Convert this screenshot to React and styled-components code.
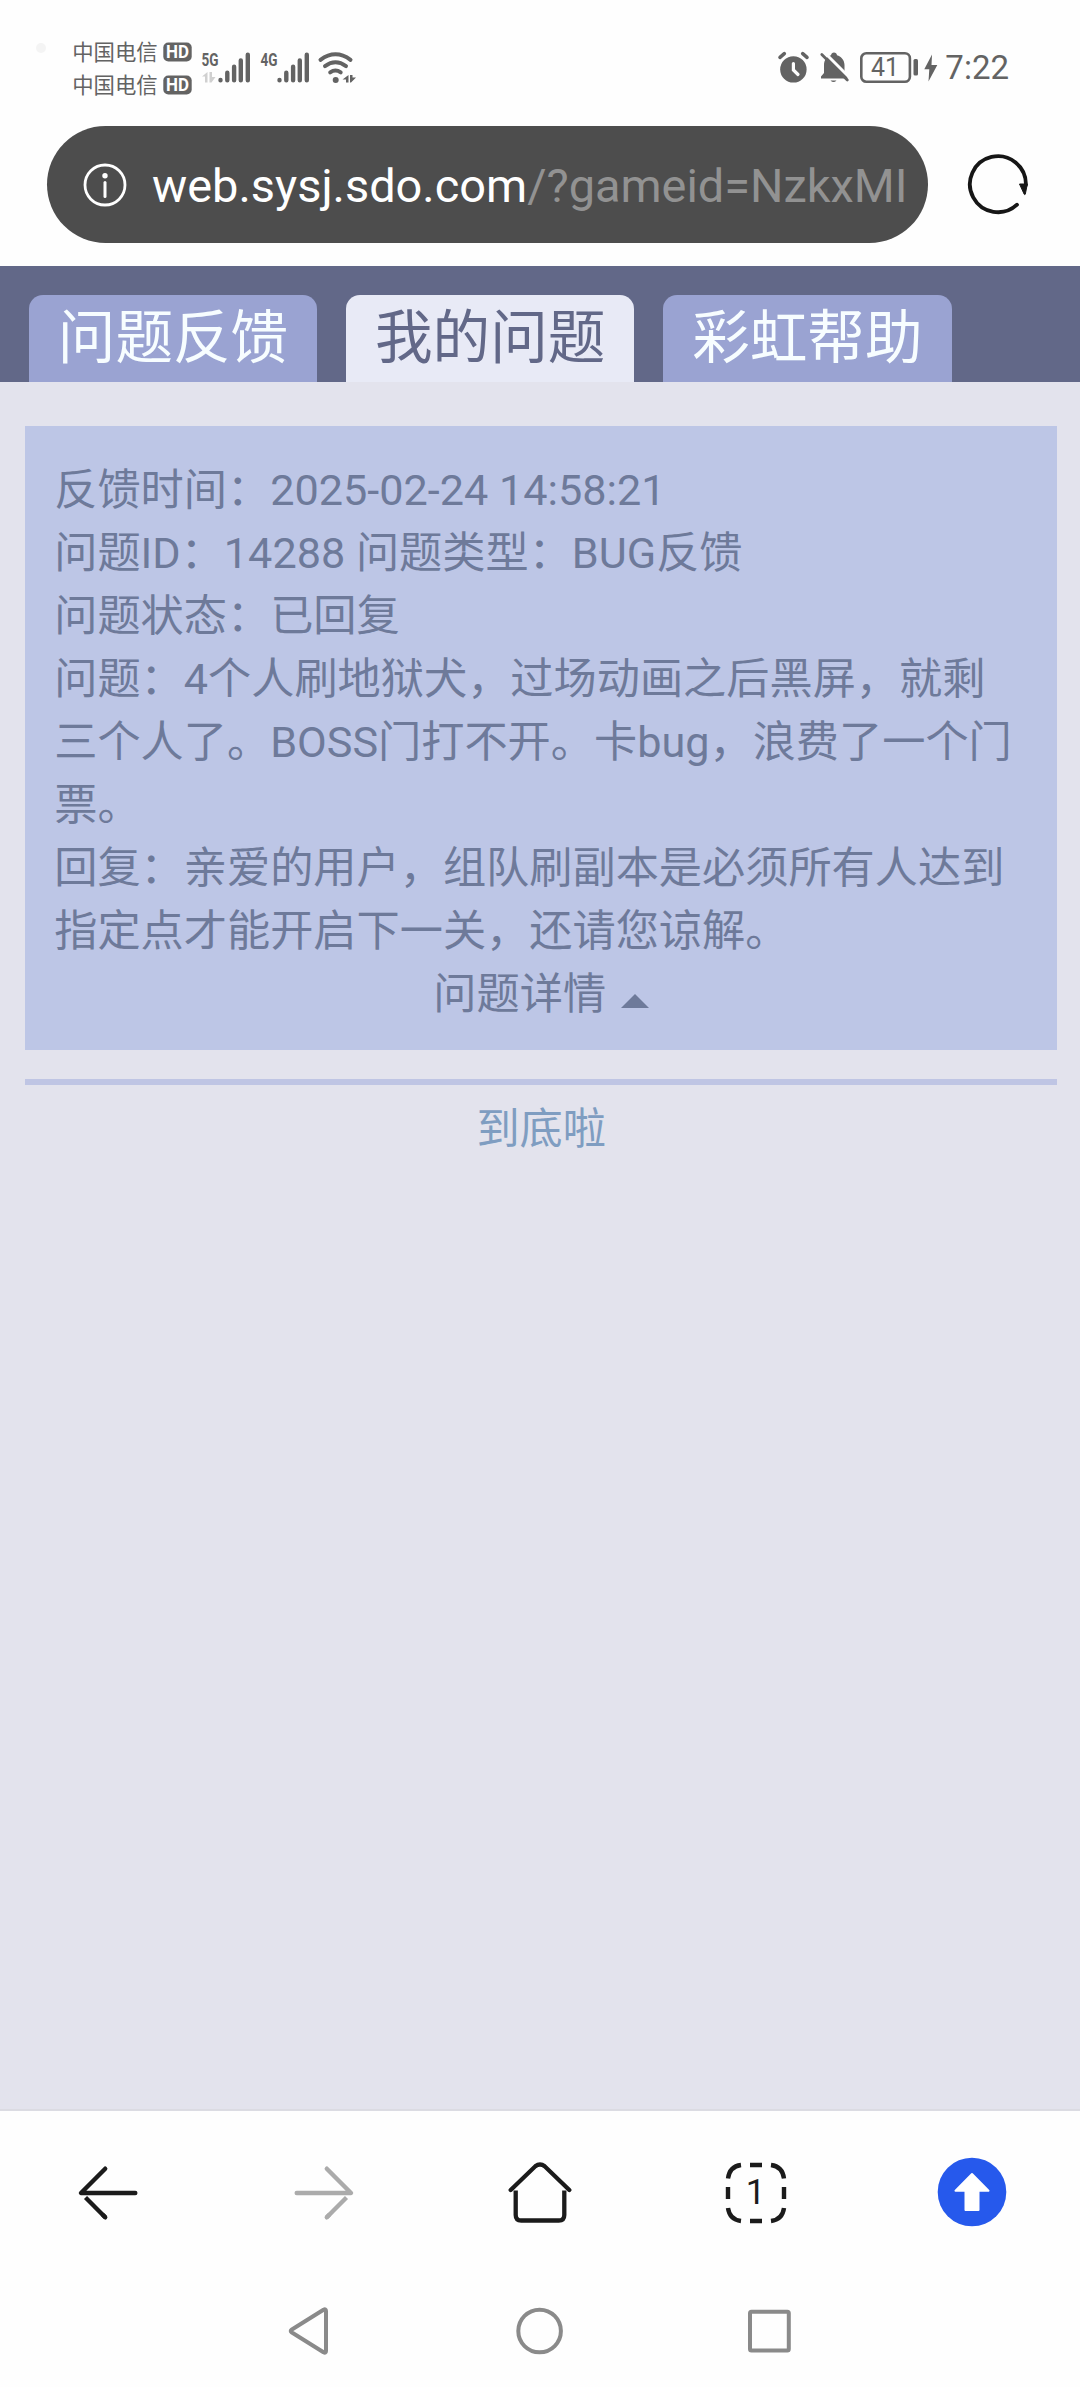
import React from "react";
import styled, { createGlobalStyle } from "styled-components";

const GlobalStyle = createGlobalStyle`
  body {
    margin: 0;
    background: #fefefe;
    font-family: Roboto, "Noto Sans CJK SC", sans-serif;
  }
  svg { display: block; flex: none; overflow: visible; }
`;

const Screen = styled.div`
  width: 1080px;
  height: 2387px;
  display: flex;
  flex-direction: column;
  overflow: hidden;
`;

const StatusBar = styled.header`
  box-sizing: border-box;
  height: 105px;
  padding: 30px 71px 0 36px;
  display: flex;
  align-items: center;
  justify-content: space-between;
  color: #636363;
`;

const StatusGroup = styled.div`
  display: flex;
  align-items: center;
  gap: ${(p) => p.$gap}px;
`;

const CameraDot = styled.i`
  width: 10px;
  height: 10px;
  margin: 0 17px 40px 0;
  border-radius: 50%;
  background: #f4f4f4;
`;

const Carriers = styled.div`
  display: flex;
  flex-direction: column;
  padding-top: 2px;
`;

const Carrier = styled.div`
  display: flex;
  align-items: center;
  gap: 5px;
  height: 33px;
  font-size: 21.4px;
  line-height: 33px;
`;

const Clock = styled.time`
  font-size: 33px;
  line-height: 40px;
  margin-left: -4px;
`;

const AddressRow = styled.div`
  display: flex;
  align-items: center;
  height: 117px;
  padding: 21px 52px 23px 47px;
  justify-content: space-between;
`;

const AddressBar = styled.div`
  box-sizing: border-box;
  width: 881px;
  height: 117px;
  padding: 0 20px 0 36px;
  border-radius: 59px;
  background: #4d4d4d;
  display: flex;
  align-items: center;
  gap: 25px;
`;

const Url = styled.div`
  flex: 1;
  padding-top: 3px;
  white-space: nowrap;
  font-size: 46.9px;
  line-height: 60px;
  color: #fff;
`;

const UrlRest = styled.span`
  color: #929292;
`;

const Tabs = styled.nav`
  box-sizing: border-box;
  height: 115.5px;
  padding: 29px 28.8px 0;
  display: flex;
  gap: 28.8px;
  background: #626888;
`;

const Tab = styled.button`
  width: 288.4px;
  padding: 1px 0 0;
  border: 0;
  border-radius: 14px 14px 0 0;
  font: inherit;
  font-size: 57.6px;
  line-height: 84px;
  color: ${(p) => (p.$active ? "#626888" : "#f7fdff")};
  background: ${(p) => (p.$active ? "#e8eaf6" : "#9aa3d2")};
`;

const Content = styled.main`
  flex: 1;
  padding: 44.5px 23px 0 25.4px;
  background: #e3e3ed;
  font-size: 43.2px;
  line-height: 63px;
`;

const Card = styled.article`
  padding: 32.5px 28.8px 24.5px;
  background: #bdc6e6;
  color: #6e7a9a;
  white-space: nowrap;
`;

const Details = styled.div`
  display: flex;
  align-items: center;
  justify-content: center;
  gap: 15px;
`;

const Triangle = styled.i`
  margin-top: 14px;
  border: 14.4px solid transparent;
  border-top: 0;
  border-bottom: 14.4px solid #6e7a9a;
`;

const EndRule = styled.hr`
  height: 6px;
  margin: 29px 0 12.5px;
  border: 0;
  background: #bfc5e4;
`;

const EndText = styled.p`
  margin: 0;
  text-align: center;
  color: #7f9dc1;
`;

const Toolbar = styled.footer`
  box-sizing: border-box;
  height: 165px;
  border-top: 2px solid #dbdbe2;
  display: grid;
  grid-template-columns: repeat(5, 216px);
  place-items: center;
`;

const SystemBar = styled.div`
  height: 113px;
  display: grid;
  grid-template-columns: repeat(3, 230px);
  justify-content: center;
  place-items: center;
`;

const HdBadge = () => (
  <svg width="29" height="20" viewBox="0 0 29 20">
    <rect x="0.3" y="0.5" width="28.4" height="19" rx="5" fill="#636363" />
    <text x="3" y="16" fontSize="17.5" fontWeight="700" fill="#fff" textLength="23" lengthAdjust="spacingAndGlyphs">HD</text>
  </svg>
);

const Signal = ({ label, arrows }) => (
  <svg width="50" height="31" viewBox="0 0 50 31">
    <text x="0.5" y="14" fontSize="18.5" fontWeight="700" fill="#636363" textLength="17" lengthAdjust="spacingAndGlyphs">{label}</text>
    {arrows && <path d="M6.500 20v10.500h-2.500v-6H1zM8.500 20v10.500h2l4-5.500h-3.500v-5z" fill="#d0d0d0" />}
    <g stroke="#636363" strokeWidth="4.400" strokeLinecap="round">
      <path d="M19.500 27.900v.4M26.300 20.700v7.600M33.100 14.700v13.600M39.800 8.500v19.800M46.800 2.700v25.600" />
    </g>
  </svg>
);

const WifiSvg = styled.svg`
  margin-left: -2px;
`;

const Wifi = () => (
  <WifiSvg width="39" height="31" viewBox="0 0 39 31" fill="none" stroke="#636363" strokeWidth="4" strokeLinecap="round">
    <path d="M3.500 7.800Q18.500-3.300 33.500 7.800M8 14.100Q18.500 6.500 29 14.100M13.200 20.300Q18.500 16.800 23.700 20.300" />
    <circle cx="18.700" cy="28" r="3" fill="#636363" stroke="none" />
    <path d="M31.500 23v7.500h-2.500v-3h-3.500zM33 23v7.500h1l5-5h-3.500v-2.500z" fill="#636363" stroke="none" />
  </WifiSvg>
);

const Alarm = () => (
  <svg width="31" height="31" viewBox="0 0 31 31" fill="none" strokeLinecap="round">
    <circle cx="15.400" cy="17.400" r="13.200" fill="#636363" />
    <path d="M2 5.300l4.300-3.600M29 5.300l-4.300-3.600" stroke="#636363" strokeWidth="3.600" />
    <path d="M15.400 11.500v6.500l4.600 4.500" stroke="#fefefe" strokeWidth="3.200" />
  </svg>
);

const BellOff = () => (
  <svg width="29" height="31" viewBox="0 0 29 31">
    <path d="M1 26.500v-2l3-3.500V13c0-5 3-8.500 7-9.700Q11.500.5 14 .5t3 2.800c4 1.200 7.500 4.700 7.500 9.700v8l3 3.500v2zM10.500 28.500h6Q13.500 31.500 10.500 28.500z" fill="#636363" />
    <path d="M3.500-.5l28 28" stroke="#fefefe" strokeWidth="3" />
    <path d="M1.800 2.500l25.500 25.500" stroke="#636363" strokeWidth="2.800" strokeLinecap="round" />
  </svg>
);

const BatterySvg = styled.svg`
  margin-right: -5.5px;
`;

const Battery = () => (
  <BatterySvg width="59" height="31" viewBox="0 0 59 31">
    <rect x="1.300" y="1.300" width="48.600" height="28.400" rx="5" fill="none" stroke="#636363" strokeWidth="2.600" />
    <rect x="53.500" y="7" width="4.500" height="16.500" rx="1.500" fill="#636363" />
    <text x="11" y="24" fontSize="25.500" fill="#636363" textLength="28" lengthAdjust="spacingAndGlyphs">41</text>
  </BatterySvg>
);

const Bolt = () => (
  <svg width="14" height="28" viewBox="0 0 14 28">
    <path d="M8 .5L.3 15.300h5L4.500 27.500 13.300 11H7.500z" fill="#636363" />
  </svg>
);

const Info = () => (
  <svg width="44" height="44" viewBox="0 0 44 44" fill="none" stroke="#fff" strokeLinecap="round">
    <circle cx="22" cy="22" r="20" strokeWidth="2.800" />
    <path d="M22 19.500v14" strokeWidth="3" />
    <circle cx="22" cy="12.800" r="2.700" fill="#fff" stroke="none" />
  </svg>
);

const Reload = () => (
  <svg width="60" height="62" viewBox="0 0 60 62">
    <path d="M49 50.700A28 28 0 1 1 57.900 31" fill="none" stroke="#161616" strokeWidth="3.800" strokeLinecap="round" />
    <path d="M51.500 30h7.800L57.300 40.200Q56.800 41 56.200 40.200z" fill="#161616" stroke="#161616" strokeWidth="1" strokeLinejoin="round" />
  </svg>
);

const Arrow = ({ forward }) => (
  <svg width="60" height="60" viewBox="0 0 60 60" fill="none" stroke={forward ? "#ababab" : "#1b1b1b"} strokeWidth="4.400" strokeLinecap="round">
    <g transform={forward ? "translate(60 0) scale(-1 1)" : undefined}>
      <path d="M27.200 5.700L3 30h54.300" strokeLinejoin="round" />
      <path d="M7.500 34.500L27.200 54.300" strokeLinecap="butt" />
      <path d="M25 52l2.200 2.300" />
    </g>
  </svg>
);

const Home = () => (
  <svg width="66" height="64" viewBox="0 0 66 64" fill="none" stroke="#1b1b1b" strokeWidth="4.300">
    <path d="M3.700 29L28.300 5.300Q33 1.700 37.700 5.300L62.300 29" strokeLinecap="round" />
    <path d="M8.700 29.500V54q0 5.500 5.500 5.500h37.600q5.500 0 5.500-5.500V29.500" />
  </svg>
);

const TabCount = () => (
  <svg width="62" height="62" viewBox="0 0 62 62" fill="none" stroke="#1b1b1b" strokeWidth="4.400">
    <path d="M3 16.500Q4.500 4.500 16 3M46 3Q57.500 4.500 59 16.500M59 46Q57.500 57.500 46 59M16 59Q4.500 57.500 3 46M25 3h12M25 59h12M3 25v12M59 25v12" />
    <text x="30.500" y="41.500" fontSize="35" textAnchor="middle" fill="#1b1b1b" stroke="none">1</text>
  </svg>
);

const UpCircle = () => (
  <svg width="70" height="70" viewBox="0 0 70 70">
    <circle cx="35" cy="34" r="34.300" fill="#2659ec" />
    <path d="M35 16L51.500 32.800H41.500V52h-13V32.800h-10z" fill="#fff" stroke="#fff" strokeWidth="2" strokeLinejoin="round" />
  </svg>
);

const SystemIcon = ({ children }) => (
  <svg width="50" height="50" viewBox="0 0 50 50" fill="none" stroke="#8a8a8a" strokeWidth="4" strokeLinejoin="round">
    {children}
  </svg>
);

const tabs = ["问题反馈", "我的问题", "彩虹帮助"];
const lines = [
  "反馈时间：2025-02-24 14:58:21",
  "问题ID：14288 问题类型：BUG反馈",
  "问题状态：已回复",
  "问题：4个人刷地狱犬，过场动画之后黑屏，就剩",
  "三个人了。BOSS门打不开。卡bug，浪费了一个门",
  "票。",
  "回复：亲爱的用户，组队刷副本是必须所有人达到",
  "指定点才能开启下一关，还请您谅解。",
];

export default function App() {
  return (
    <Screen lang="zh-CN">
      <GlobalStyle />
      <StatusBar>
        <StatusGroup $gap={9.2}>
          <CameraDot />
          <Carriers>
            <Carrier>中国电信<HdBadge /></Carrier>
            <Carrier>中国电信<HdBadge /></Carrier>
          </Carriers>
          <Signal label="5G" arrows />
          <Signal label="4G" />
          <Wifi />
        </StatusGroup>
        <StatusGroup $gap={11}>
          <Alarm />
          <BellOff />
          <Battery />
          <Bolt />
          <Clock>7:22</Clock>
        </StatusGroup>
      </StatusBar>
      <AddressRow>
        <AddressBar>
          <Info />
          <Url>web.sysj.sdo.com<UrlRest>/?gameid=NzkxMI</UrlRest></Url>
        </AddressBar>
        <Reload />
      </AddressRow>
      <Tabs>
        {tabs.map((t) => (
          <Tab key={t} $active={t === "我的问题"}>{t}</Tab>
        ))}
      </Tabs>
      <Content>
        <Card>
          {lines.map((l) => (
            <div key={l}>{l}</div>
          ))}
          <Details>问题详情<Triangle /></Details>
        </Card>
        <EndRule />
        <EndText>到底啦</EndText>
      </Content>
      <Toolbar>
        <Arrow />
        <Arrow forward />
        <Home />
        <TabCount />
        <UpCircle />
      </Toolbar>
      <SystemBar>
        <SystemIcon><path d="M6.500 23.700L38.500 3.700Q41 2.500 41 5V45Q41 47.500 38.500 46.300L6.500 26.300Q5 25 6.500 23.700z" /></SystemIcon>
        <SystemIcon><circle cx="24.600" cy="25" r="21.300" /></SystemIcon>
        <SystemIcon><rect x="5" y="5.800" width="38.800" height="38.800" rx="1.500" /></SystemIcon>
      </SystemBar>
    </Screen>
  );
}
